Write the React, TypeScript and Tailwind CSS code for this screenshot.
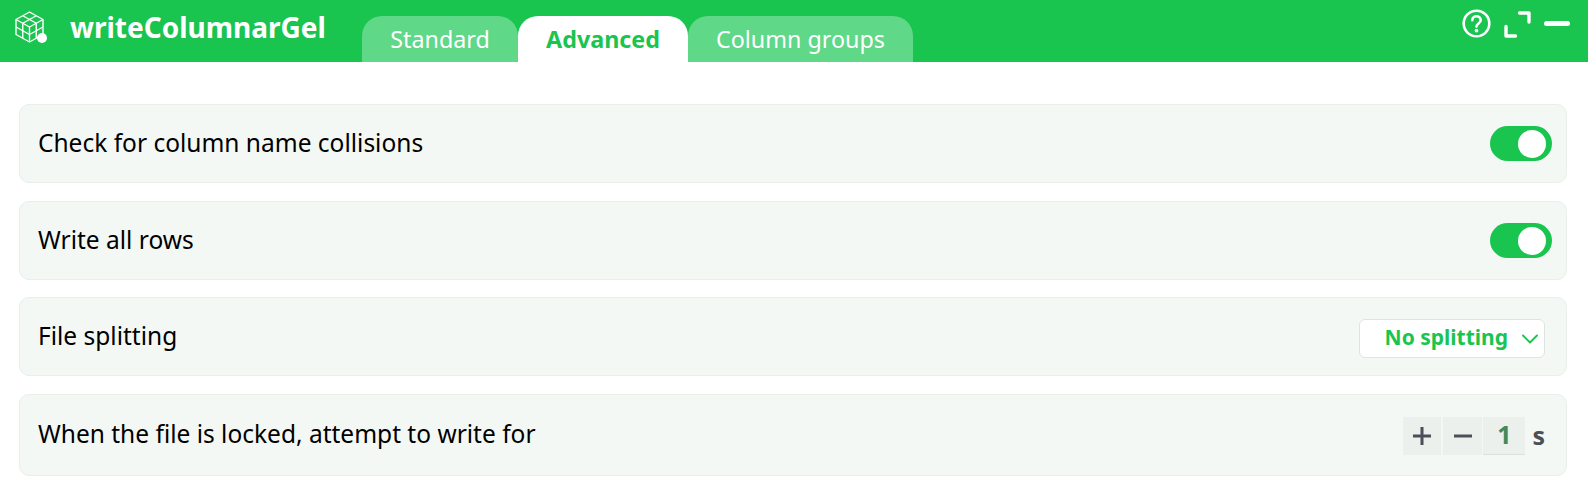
const font = "font-['Noto_Sans',sans-serif]";

function CubeIcon() {
  return (
    <svg className="w-[33px] h-[34px]" viewBox="0 0 33 34" fill="none" stroke="white" strokeWidth="1.4" strokeLinejoin="round">
      <path d="M14.5 1 L28 8.5 V23.5 L14.5 31 L1 23.5 V8.5 Z" />
      <path d="M1 8.5 L14.5 16 L28 8.5 M14.5 16 V31" />
      <path d="M7.75 4.75 L21.25 12.25 M21.25 4.75 L7.75 12.25" />
      <path d="M1 16 L14.5 23.5 L28 16" />
      <path d="M7.75 12.25 V27.25 M21.25 12.25 V27.25" />
      <circle cx="27" cy="27" r="5" fill="white" stroke="none" />
    </svg>
  );
}

function Toggle() {
  return (
    <div className="w-[62px] h-[35px] rounded-full bg-[#19c54f] flex items-center justify-end pr-[6px]">
      <div className="w-[28px] h-[28px] rounded-full bg-white" />
    </div>
  );
}

function Row({ label, h, children }: { label: string; h: string; children: React.ReactNode }) {
  return (
    <div className={`${h} flex items-center justify-between pl-[18px] rounded-[10px] border border-[#e9eeeb] bg-[#f4f8f5]`}>
      <span className="text-[24.5px] leading-[32px] text-black -mt-[2px]">{label}</span>
      {children}
    </div>
  );
}

export default function App() {
  return (
    <div className={`${font} w-[1588px] h-[491px] bg-white overflow-hidden`}>
      <header className="h-[62px] bg-[#19c54f] flex items-start">
        <div className="ml-[15px] mt-[11px]">
          <CubeIcon />
        </div>
        <div className="ml-[22px] mt-[8px] text-[28px] leading-[38px] font-bold text-white">writeColumnarGel</div>
        <nav className="absolute left-[362px] top-[16px] flex h-[46px] text-[23.3px] leading-[46px]">
          <div className="w-[156px] rounded-t-[20px] bg-[#5fd887] text-white text-center">Standard</div>
          <div className="w-[170px] rounded-t-[20px] bg-white text-[#19c54f] font-bold text-center">Advanced</div>
          <div className="w-[225px] rounded-t-[20px] bg-[#5fd887] text-white text-center">Column groups</div>
        </nav>
        <div className="ml-auto mt-[9px] mr-[18px] flex items-start gap-[13px]">
          <svg className="w-[29px] h-[29px]" viewBox="0 0 29 29" fill="none" stroke="white" strokeWidth="2.6" strokeLinecap="round">
            <circle cx="14.5" cy="14.5" r="12.8" />
            <path d="M10.3 11.3 C10.3 5.8 18.7 5.8 18.7 11.3 C18.7 14.6 14.5 14.4 14.5 17.6" />
            <circle cx="14.5" cy="21.6" r="0.6" fill="white" />
          </svg>
          <svg className="w-[27px] h-[27px] mt-[2px]" viewBox="0 0 27 27" fill="none" stroke="white" strokeWidth="3.4" strokeLinecap="round" strokeLinejoin="round">
            <path d="M15.5 2 H25 V11" />
            <path d="M2 15.5 V25 H11.5" />
          </svg>
          <div className="w-[26px] h-[5px] mt-[12px] rounded-full bg-white" />
        </div>
      </header>
      <main className="pl-[19px] pt-[42px] pr-[21px] flex flex-col">
        <Row label="Check for column name collisions" h="h-[79px]">
          <div className="mr-[14px]"><Toggle /></div>
        </Row>
        <div className="mt-[18px]">
          <Row label="Write all rows" h="h-[79px]">
            <div className="mr-[14px]"><Toggle /></div>
          </Row>
        </div>
        <div className="mt-[17px]">
          <Row label="File splitting" h="h-[79px]">
            <div className="mr-[21px] mt-[4px] w-[186px] h-[39px] rounded-[6px] border border-[#dde5e1] bg-white flex items-center justify-end pr-[6px] gap-[14px]">
              <span className="text-[21px] font-bold text-[#19c54f] -mt-[1px]">No splitting</span>
              <svg className="w-[16px] h-[10px]" viewBox="0 0 16 10" fill="none" stroke="#19c54f" strokeWidth="1.9" strokeLinecap="round" strokeLinejoin="round">
                <path d="M1 1.5 L8 8.5 L15 1.5" />
              </svg>
            </div>
          </Row>
        </div>
        <div className="mt-[18px]">
          <Row label="When the file is locked, attempt to write for" h="h-[82px]">
            <div className="mr-[21px] mt-[1px] flex items-center text-[25px] font-bold text-[#4b5058]">
              <div className="w-[38px] h-[38px] bg-[#ebf0ed] flex items-center justify-center">
                <svg className="w-[18px] h-[18px]" viewBox="0 0 18 18" stroke="#4b5058" strokeWidth="3">
                  <path d="M0 9 H18 M9 0 V18" />
                </svg>
              </div>
              <div className="w-[39px] h-[38px] ml-[2px] bg-[#ebf0ed] flex items-center justify-center">
                <svg className="w-[18px] h-[4px]" viewBox="0 0 18 4" stroke="#4b5058" strokeWidth="3">
                  <path d="M0 2 H18" />
                </svg>
              </div>
              <div className="w-[42px] h-[38px] ml-[1px] bg-[#ebf0ed] border-b border-[#dbe2de] flex items-center justify-center text-[#428a5c]">1</div>
              <span className="ml-[7px]">s</span>
            </div>
          </Row>
        </div>
      </main>
    </div>
  );
}
